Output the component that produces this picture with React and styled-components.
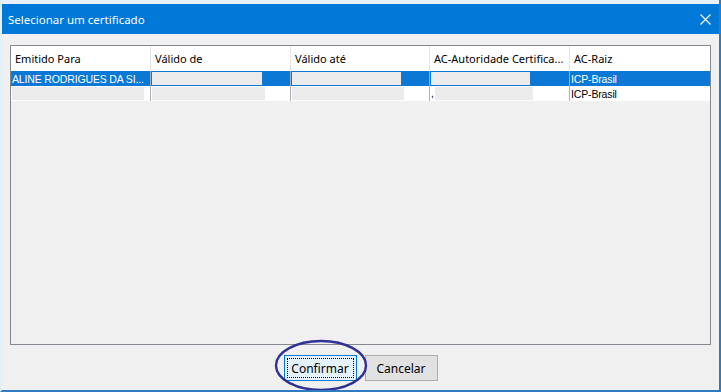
import React from 'react'
import styled, { createGlobalStyle } from 'styled-components'

const columns = ['Emitido Para', 'Válido de', 'Válido até', 'AC-Autoridade Certifica...', 'AC-Raiz']

const rows = [
  {
    selected: true,
    cells: [
      { text: 'ALINE RODRIGUES DA SI...' },
      { mask: 110 },
      { mask: 109 },
      { mask: 99 },
      { text: 'ICP-Brasil' },
    ],
  },
  {
    selected: false,
    cells: [
      { mask: 132 },
      { mask: 113 },
      { mask: 112 },
      { mask: 98, lead: ',' },
      { text: 'ICP-Brasil' },
    ],
  },
]

const App = () => {
  return (
    <>
      <GlobalStyle />
      <Window>
        <TopStrip />
        <TitleBar>
          <Title>Selecionar um certificado</Title>
          <CloseButton>
            <svg width="11" height="11" viewBox="0 0 11 11">
              <path d="M0.5 0.5 L10.5 10.5 M10.5 0.5 L0.5 10.5" stroke="#fff" strokeWidth="1.1" fill="none" />
            </svg>
          </CloseButton>
        </TitleBar>
        <Client>
          <Table>
            <HeaderRow>
              {columns.map((c, i) => (
                <HeaderCell key={i} last={i === columns.length - 1}>{c}</HeaderCell>
              ))}
            </HeaderRow>
            {rows.map((r, i) => (
              <Row key={i} selected={r.selected}>
                {r.cells.map((c, j) => (
                  <Cell key={j} selected={r.selected} last={j === r.cells.length - 1}>
                    {c.lead && <Lead>{c.lead}</Lead>}
                    {c.mask && <Mask style={{ width: c.mask }} />}
                    {c.text}
                  </Cell>
                ))}
              </Row>
            ))}
          </Table>
          <Footer>
            <Button primary>
              <FocusRing>Confirmar</FocusRing>
            </Button>
            <Button>Cancelar</Button>
            <Circle width="94" height="53" viewBox="0 0 94 53">
              <ellipse cx="47" cy="26.5" rx="45" ry="24.5" fill="none" stroke="#2f3194" strokeWidth="2.4" />
            </Circle>
          </Footer>
        </Client>
      </Window>
    </>
  )
}

export default App

const GlobalStyle = createGlobalStyle`
  html, body {
    margin: 0;
    padding: 0;
    background: #f0f0f0;
  }
`

const Window = styled.div`
  width: 721px;
  height: 392px;
  display: flex;
  flex-direction: column;
  box-sizing: border-box;
  border-left: 2px solid #dcf1fa;
  border-right: 2px solid #2d7bc0;
  border-bottom: 2px solid #2d7bc0;
  background: #f0f0f0;
  font-family: "Noto Sans", "Open Sans", sans-serif;
  overflow: hidden;
`

const TopStrip = styled.div`
  height: 4px;
  background: #e9f0f7;
  margin: 0 -2px 0 -2px;
`

const TitleBar = styled.div`
  height: 30px;
  display: flex;
  align-items: center;
  justify-content: space-between;
  background: #0078d7;
  margin: 0 -2px 0 -2px;
  padding: 0 10px 0 8px;
`

const Title = styled.span`
  color: #fff;
  font-size: 11.5px;
`

const CloseButton = styled.div`
  width: 12px;
  height: 12px;
  display: flex;
  align-items: center;
  justify-content: center;
`

const Client = styled.div`
  flex: 1;
  display: flex;
  flex-direction: column;
  padding: 11px 8px 0 8px;
`

const Table = styled.div`
  height: 300px;
  box-sizing: border-box;
  border: 1px solid #828790;
  background: #f0f0f0;
`

const HeaderRow = styled.div`
  display: grid;
  grid-template-columns: 140px 140px 139px 140px 1fr;
  height: 25px;
  background: #fff;
`

const HeaderCell = styled.div`
  display: flex;
  align-items: center;
  padding-left: 4px;
  font-size: 11px;
  color: #000;
  border-right: ${p => (p.last ? 'none' : '1px solid #e5e5e5')};
  white-space: nowrap;
  overflow: hidden;
`

const Row = styled.div`
  display: grid;
  grid-template-columns: 140px 140px 139px 140px 1fr;
  height: 15px;
  background: ${p => (p.selected ? '#0a78d4' : '#fff')};
`

const Cell = styled.div`
  display: flex;
  align-items: center;
  padding-left: 1px;
  font-family: "Liberation Sans", Arial, sans-serif;
  font-size: 10.5px;
  letter-spacing: -0.15px;
  color: ${p => (p.selected ? '#fff' : '#000')};
  border-right: ${p => (p.last ? 'none' : '1px solid #a9b0b8')};
  white-space: nowrap;
  overflow: hidden;
`

const Mask = styled.div`
  height: 13px;
  background: #ebebeb;
`

const Lead = styled.span`
  font-size: 10px;
  margin-right: 1px;
  line-height: 1;
`

const Footer = styled.div`
  position: relative;
  display: flex;
  justify-content: center;
  gap: 8px;
  padding-top: 10px;
`

const Button = styled.div`
  width: 73px;
  height: 26px;
  box-sizing: border-box;
  display: flex;
  align-items: center;
  justify-content: center;
  padding: 2px;
  font-size: 12px;
  color: #000;
  background: ${p => (p.primary ? '#e5f1fb' : '#e1e1e1')};
  border: 1px solid ${p => (p.primary ? '#0078d7' : '#adadad')};
`

const FocusRing = styled.div`
  flex: 1;
  align-self: stretch;
  display: flex;
  align-items: center;
  justify-content: center;
  border: 1px dotted #000;
`

const Circle = styled.svg`
  position: absolute;
  left: 264px;
  top: -6px;
  pointer-events: none;
`
